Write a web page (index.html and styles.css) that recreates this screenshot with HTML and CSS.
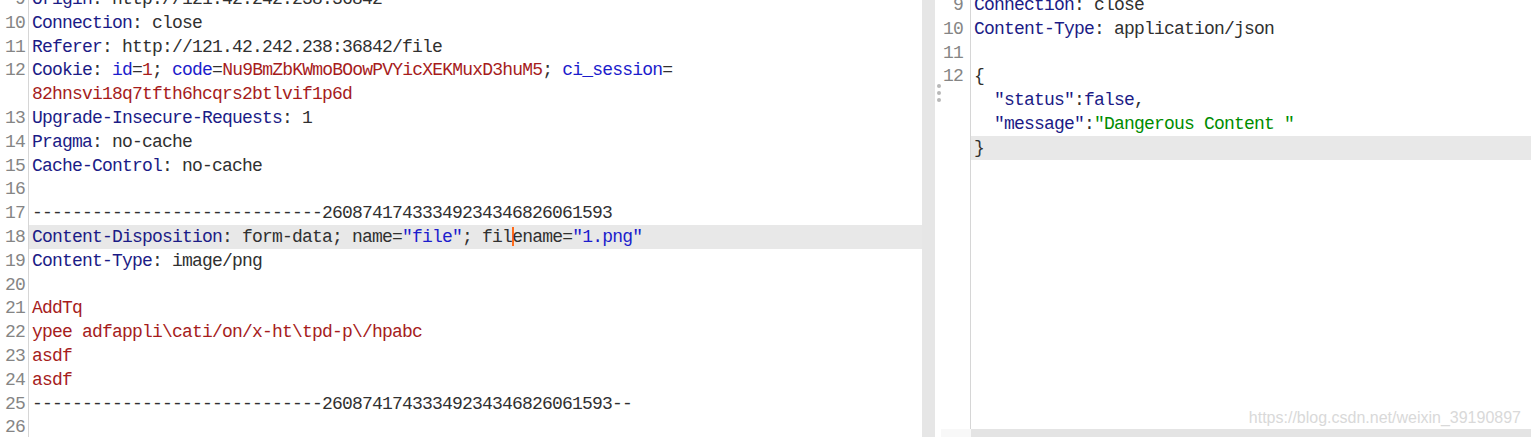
FILE: index.html
```html
<!DOCTYPE html>
<html>
<head>
<meta charset="utf-8">
<link rel="stylesheet" href="styles.css">
</head>
<body>
<div class="app">
  <section class="pane pane-left">
    <div class="editor">
      <div class="gutter gutter-left">
        <div class="ln">9</div>
        <div class="ln">10</div>
        <div class="ln">11</div>
        <div class="ln">12</div>
        <div class="ln"></div>
        <div class="ln">13</div>
        <div class="ln">14</div>
        <div class="ln">15</div>
        <div class="ln">16</div>
        <div class="ln">17</div>
        <div class="ln">18</div>
        <div class="ln">19</div>
        <div class="ln">20</div>
        <div class="ln">21</div>
        <div class="ln">22</div>
        <div class="ln">23</div>
        <div class="ln">24</div>
        <div class="ln">25</div>
        <div class="ln">26</div>
      </div>
      <div class="code code-left">
        <div class="line"><span class="hn">Origin</span>: http://121.42.242.238:36842</div>
        <div class="line"><span class="hn">Connection</span>: close</div>
        <div class="line"><span class="hn">Referer</span>: http://121.42.242.238:36842/file</div>
        <div class="line"><span class="hn">Cookie</span>: <span class="ck">id</span>=<span class="cv">1</span>; <span class="ck">code</span>=<span class="cv">Nu9BmZbKWmoBOowPVYicXEKMuxD3huM5</span>; <span class="ck">ci_session</span>=</div>
        <div class="line"><span class="cv">82hnsvi18q7tfth6hcqrs2btlvif1p6d</span></div>
        <div class="line"><span class="hn">Upgrade-Insecure-Requests</span>: 1</div>
        <div class="line"><span class="hn">Pragma</span>: no-cache</div>
        <div class="line"><span class="hn">Cache-Control</span>: no-cache</div>
        <div class="line"></div>
        <div class="line">-----------------------------26087417433349234346826061593</div>
        <div class="line active"><span class="hn">Content-Disposition</span>: form-data; name=<span class="str">"file"</span>; fil<span class="caret"></span>ename=<span class="str">"1.png"</span></div>
        <div class="line"><span class="hn">Content-Type</span>: image/png</div>
        <div class="line"></div>
        <div class="line"><span class="cv">AddTq</span></div>
        <div class="line"><span class="cv">ypee adfappli\cati/on/x-ht\tpd-p\/hpabc</span></div>
        <div class="line"><span class="cv">asdf</span></div>
        <div class="line"><span class="cv">asdf</span></div>
        <div class="line">-----------------------------26087417433349234346826061593--</div>
        <div class="line"></div>
      </div>
    </div>
  </section>
  <div class="divider"></div>
  <section class="pane pane-right">
    <div class="grip"><i></i><i></i><i></i></div>
    <div class="editor editor-right">
      <div class="gutter gutter-right">
        <div class="ln">9</div>
        <div class="ln">10</div>
        <div class="ln">11</div>
        <div class="ln">12</div>
      </div>
      <div class="code code-right">
        <div class="line"><span class="hn">Connection</span>: close</div>
        <div class="line"><span class="hn">Content-Type</span>: application/json</div>
        <div class="line"></div>
        <div class="line">{</div>
        <div class="line">  <span class="hn">"status"</span>:<span class="hn">false</span>,</div>
        <div class="line">  <span class="hn">"message"</span>:<span class="green">"Dangerous Content "</span></div>
        <div class="line active">}</div>
      </div>
    </div>
    <div class="hscroll">
      <div class="hs-gap"></div>
      <div class="hs-corner"></div>
      <div class="hs-track"></div>
    </div>
  </section>
</div>
<div class="watermark">https://blog.csdn.net/weixin_39190897</div>
</body>
</html>
```
FILE: styles.css
```css
html, body {
  margin: 0;
  padding: 0;
  background: #ffffff;
  overflow: hidden;
}

.app {
  display: flex;
  width: 1531px;
  height: 437px;
  overflow: hidden;
  font-family: "Liberation Mono", "DejaVu Sans Mono", monospace;
  font-size: 18px;
  letter-spacing: -0.8px;
  color: #303030;
}

.pane {
  height: 437px;
  overflow: hidden;
}

.pane-left {
  width: 922px;
  flex: none;
}

.divider {
  width: 13px;
  flex: none;
  background: #e6e6e6;
}

.pane-right {
  flex: 1;
  display: flex;
  flex-direction: column;
  position: relative;
}

.editor {
  display: flex;
  height: 100%;
  overflow: hidden;
}

.editor-right {
  flex: 1;
  height: auto;
}

.gutter {
  flex: none;
  box-sizing: border-box;
  text-align: right;
  color: #858585;
  border-right: 1px solid #d6d6d6;
}

.gutter-left {
  width: 29px;
  padding-right: 3px;
  margin-top: -13px;
}

.gutter-right {
  width: 36px;
  padding-right: 7px;
  margin-top: -7px;
}

.code {
  flex: 1;
  min-width: 0;
}

.code-left {
  margin-top: -13px;
}

.code-right {
  margin-top: -7px;
}

.ln,
.line {
  height: 23.8px;
  line-height: 24.8px;
  white-space: pre;
}

.line {
  padding-left: 3px;
}

.line.active {
  background: #e8e8e8;
}

.hn {
  color: #1b1b86;
}

.ck {
  color: #1c1ccc;
}

.cv {
  color: #a61c1c;
}

.str {
  color: #1c1ccc;
}

.green {
  color: #008c00;
}

.caret {
  display: inline-block;
  width: 2px;
  height: 19px;
  margin-right: -2px;
  vertical-align: -4px;
  background: #ff6a1a;
}

.grip {
  position: absolute;
  left: 2px;
  top: 84px;
  display: flex;
  flex-direction: column;
  gap: 3px;
}

.grip i {
  display: block;
  width: 4px;
  height: 4px;
  border-radius: 50%;
  background: #b8b8b8;
}

.hscroll {
  display: flex;
  height: 8px;
  flex: none;
}

.hs-gap {
  width: 6px;
  background: #ffffff;
}

.hs-corner {
  width: 30px;
  background: #f8f8f8;
}

.hs-track {
  flex: 1;
  background: #e4e4e4;
}

.watermark {
  position: absolute;
  right: 10px;
  bottom: 10px;
  font-family: "Liberation Sans", Arial, sans-serif;
  font-size: 16px;
  color: #d9d9d9;
}
```
